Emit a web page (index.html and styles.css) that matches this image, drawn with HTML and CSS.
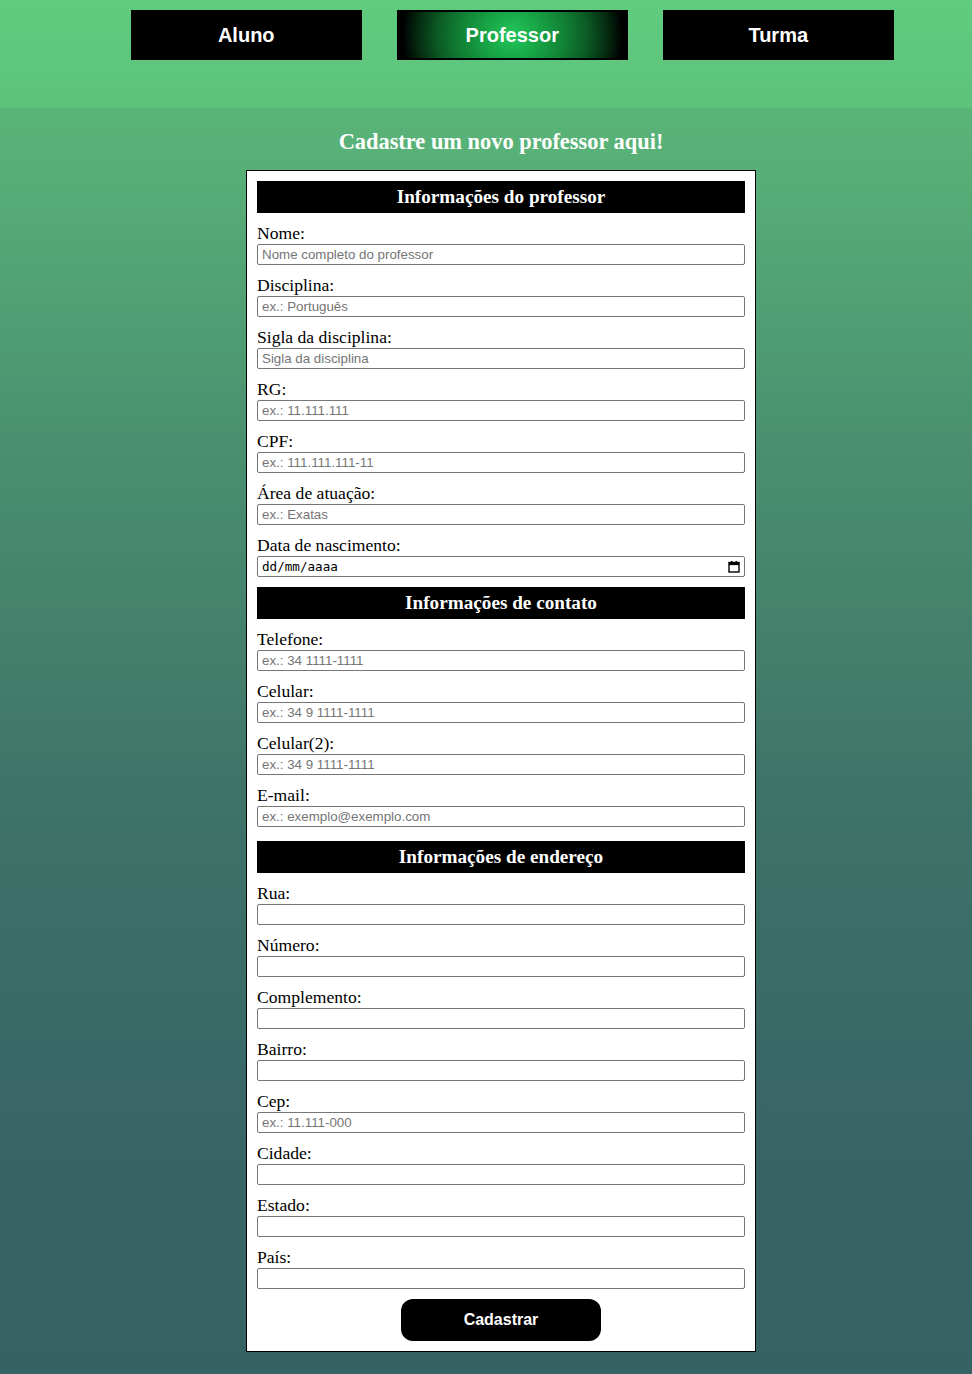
FILE: index.html
```html
<!DOCTYPE html>
<html lang="pt-BR">
<head>
<meta charset="utf-8">
<title>Cadastro de professor</title>
<link rel="stylesheet" href="styles.css">
</head>
<body>
<header class="topbar">
  <nav class="nav">
    <a class="nav-btn" href="#">Aluno</a>
    <a class="nav-btn active" href="#">Professor</a>
    <a class="nav-btn" href="#">Turma</a>
  </nav>
</header>
<main class="main">
  <h2 class="title">Cadastre um novo professor aqui!</h2>
  <form class="form">
    <h3 class="section">Informações do professor</h3>
    <div class="field"><label>Nome:</label><input type="text" placeholder="Nome completo do professor"></div>
    <div class="field"><label>Disciplina:</label><input type="text" placeholder="ex.: Português"></div>
    <div class="field"><label>Sigla da disciplina:</label><input type="text" placeholder="Sigla da disciplina"></div>
    <div class="field"><label>RG:</label><input type="text" placeholder="ex.: 11.111.111"></div>
    <div class="field"><label>CPF:</label><input type="text" placeholder="ex.: 111.111.111-11"></div>
    <div class="field"><label>Área de atuação:</label><input type="text" placeholder="ex.: Exatas"></div>
    <div class="field"><label>Data de nascimento:</label>
      <div class="date-input"><span class="date-text">dd/mm/aaaa</span>
        <svg class="cal" width="12" height="12" viewBox="0 0 12 12"><rect x="1" y="1.5" width="10" height="9.5" fill="none" stroke="#000" stroke-width="1.4"/><rect x="1" y="1.5" width="10" height="2.6" fill="#000"/><rect x="3" y="0" width="1.4" height="2" fill="#000"/><rect x="7.6" y="0" width="1.4" height="2" fill="#000"/></svg>
      </div>
    </div>

    <h3 class="section sec-contact">Informações de contato</h3>
    <div class="field"><label>Telefone:</label><input type="text" placeholder="ex.: 34 1111-1111"></div>
    <div class="field"><label>Celular:</label><input type="text" placeholder="ex.: 34 9 1111-1111"></div>
    <div class="field"><label>Celular(2):</label><input type="text" placeholder="ex.: 34 9 1111-1111"></div>
    <div class="field"><label>E-mail:</label><input type="text" placeholder="ex.: exemplo@exemplo.com"></div>

    <h3 class="section sec-address">Informações de endereço</h3>
    <div class="field"><label>Rua:</label><input type="text"></div>
    <div class="field"><label>Número:</label><input type="text"></div>
    <div class="field"><label>Complemento:</label><input type="text"></div>
    <div class="field"><label>Bairro:</label><input type="text"></div>
    <div class="field"><label>Cep:</label><input type="text" placeholder="ex.: 11.111-000"></div>
    <div class="field"><label>Cidade:</label><input type="text"></div>
    <div class="field"><label>Estado:</label><input type="text"></div>
    <div class="field"><label>País:</label><input type="text"></div>

    <div class="actions"><button type="button" class="submit">Cadastrar</button></div>
  </form>
</main>
</body>
</html>
```
FILE: styles.css
```css
html, body {
  margin: 0;
  padding: 0;
}
body {
  min-height: 1374px;
  background: linear-gradient(to bottom, #5cbd7a 0px, #58b177 150px, #4a8f70 450px, #3e7368 800px, #376565 1150px, #356262 1374px);
  font-family: "Liberation Serif", "Times New Roman", serif;
}
.topbar {
  height: 108px;
  box-sizing: border-box;
  padding-top: 10px;
  background: linear-gradient(to bottom, #60cc7f, #5dc27c);
}
.nav {
  display: flex;
  gap: 35.5px;
  padding-left: 131px;
}
.nav-btn {
  display: flex;
  align-items: center;
  justify-content: center;
  width: 230.5px;
  height: 50px;
  box-sizing: border-box;
  background: #000;
  color: #fff;
  text-decoration: none;
  font-family: "Liberation Sans", Arial, sans-serif;
  font-weight: bold;
  font-size: 20px;
}
.nav-btn.active {
  border: 2px solid #000;
  background: radial-gradient(circle farthest-corner at center, #22c65a 0%, #18a646 22%, #118236 45%, #0b5a24 65%, #052b10 82%, #000 95%);
}
.main {
  padding: 21px 0 22px 30px;
}
.title {
  margin: 0 0 16px;
  text-align: center;
  color: #fff;
  font-size: 22.4px;
  line-height: 25px;
  font-weight: bold;
}
.form {
  width: 488px;
  margin: 0 auto;
  padding: 10px;
  background: #fff;
  border: 1px solid #000;
}
.section {
  margin: 0;
  height: 32px;
  line-height: 32px;
  background: #000;
  color: #fff;
  text-align: center;
  font-size: 19.2px;
  font-weight: bold;
}
.sec-contact {
  margin-top: 10px;
}
.sec-address {
  margin-top: 14px;
}
.field {
  margin-top: 11px;
}
.field label {
  display: block;
  font-size: 17.6px;
  line-height: 19px;
  margin-bottom: 1px;
  color: #000;
}
.field input {
  display: block;
  width: 100%;
  height: 21px;
  box-sizing: border-box;
  margin: 0;
  padding: 1px 4px;
  border: 1px solid #767676;
  border-radius: 2px;
  font-family: "Liberation Sans", Arial, sans-serif;
  font-size: 13.333px;
  background: #fff;
}
.field input::placeholder {
  color: #757575;
}
.date-input {
  display: flex;
  align-items: center;
  justify-content: space-between;
  height: 21px;
  box-sizing: border-box;
  padding: 0 4px 0 4px;
  border: 1px solid #767676;
  border-radius: 2px;
}
.date-text {
  font-family: "DejaVu Sans Mono", "Liberation Mono", monospace;
  font-size: 12.6px;
  color: #000;
}
.cal {
  display: block;
}
.actions {
  display: flex;
  justify-content: center;
  margin-top: 10px;
}
.submit {
  width: 200px;
  height: 42px;
  border: none;
  border-radius: 12px;
  background: #000;
  color: #fff;
  font-family: "Liberation Sans", Arial, sans-serif;
  font-weight: bold;
  font-size: 16px;
  cursor: pointer;
}
```
